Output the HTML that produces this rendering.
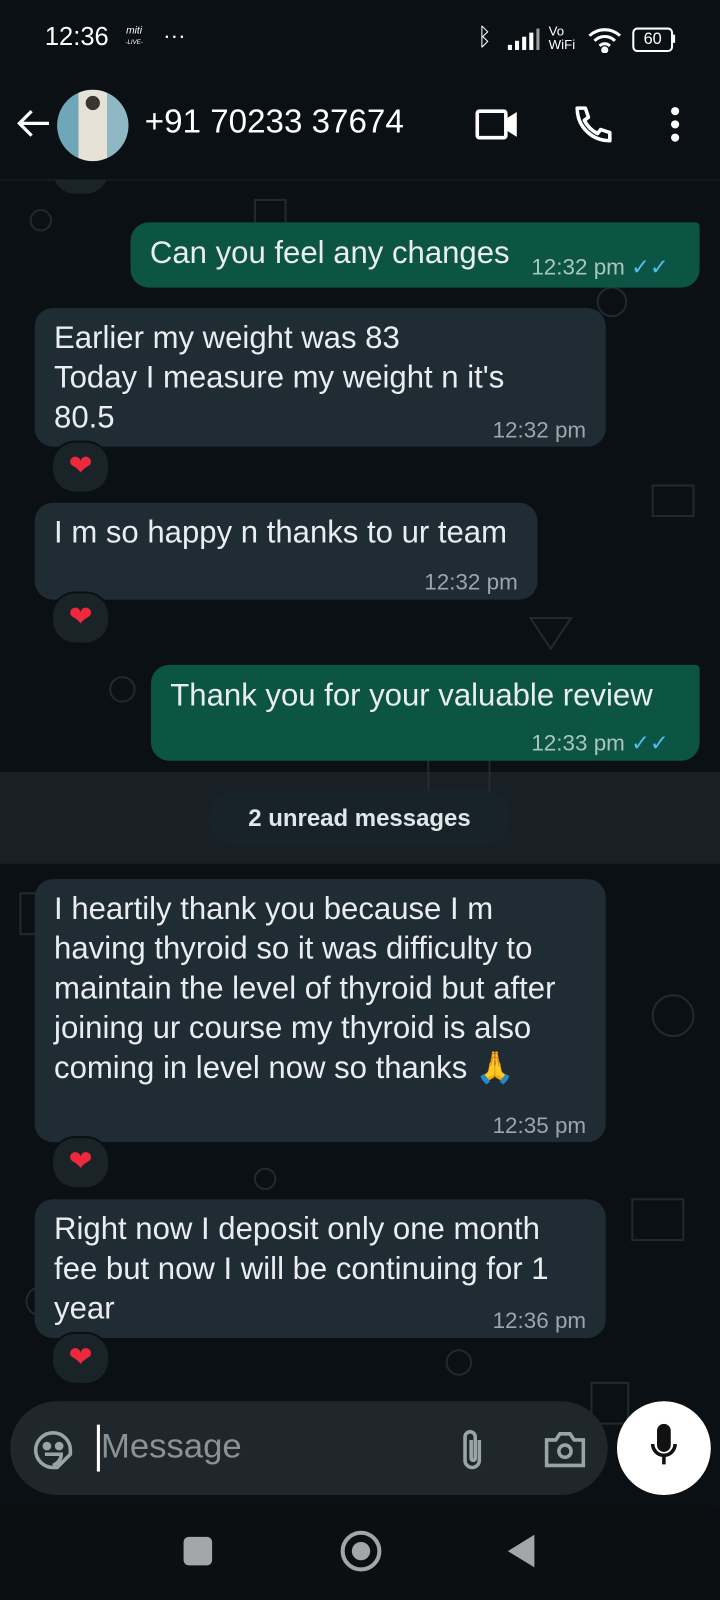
<!DOCTYPE html>
<html><head><meta charset="utf-8">
<style>
html,body{margin:0;padding:0;width:720px;height:1600px;overflow:hidden;background:#0b1014;}
#w{position:absolute;left:0;top:0;width:706px;height:1568px;transform:scale(1.0198);transform-origin:0 0;font-family:"Liberation Sans",sans-serif;color:#e9edef;}
.abs{position:absolute;}
.b{position:absolute;border-radius:18px;}
.in{background:#202c33;}
.out{background:#0c5443;}
.t{position:absolute;font-size:30.5px;line-height:39px;white-space:nowrap;}
.tm{position:absolute;font-size:22px;color:#9aa6ad;white-space:nowrap;}
.out .tm{color:#a9c6be;}
.heart{position:absolute;width:54px;height:48px;border-radius:24px;background:#1a2328;border:2px solid #0b1014;}
.heart:after{content:"❤";position:absolute;left:0;right:0;top:8px;text-align:center;color:#f0283c;font-size:28px;line-height:30px;font-family:"DejaVu Sans",sans-serif;}
</style></head><body><div id="w">
<svg class="abs" style="left:0;top:176px" width="706" height="1300" opacity="0.12" stroke="#cfd8dc" fill="none" stroke-width="2">
<circle cx="40" cy="40" r="10"/><rect x="250" y="20" width="30" height="25"/><circle cx="600" cy="120" r="14"/><rect x="640" y="300" width="40" height="30"/><circle cx="120" cy="500" r="12"/><rect x="420" y="560" width="60" height="40"/><circle cx="660" cy="820" r="20"/><rect x="20" y="700" width="40" height="40"/><circle cx="260" cy="980" r="10"/><rect x="620" y="1000" width="50" height="40"/><circle cx="40" cy="1100" r="14"/><rect x="580" y="1180" width="36" height="40"/><circle cx="450" cy="1160" r="12"/><path d="M520 430l20 30 20-30z"/><path d="M200 1250l30-20 30 20"/>
</svg>
<div class="heart" style="left:50px;top:140px;"></div>
<div class="abs" style="left:0;top:0;width:706px;height:176px;background:#0b1014;"></div>
<div class="abs" style="left:44px;top:22px;font-size:25px;color:#fff;">12:36</div>
<div class="abs" style="left:123px;top:26px;font-size:10px;color:#fff;font-style:italic;line-height:10px;text-align:center">miti<br><span style="font-size:6px">-LIVE-</span></div>
<div class="abs" style="left:160px;top:22px;font-size:22px;color:#fff;">···</div>
<div class="abs" style="left:468px;top:22px;font-size:24px;color:#fff;font-family:'DejaVu Sans'">ᛒ</div>
<svg class="abs" style="left:496px;top:28px" width="36" height="22" fill="#fff"><rect x="2" y="16" width="4" height="5"/><rect x="9" y="12" width="4" height="9"/><rect x="16" y="8" width="4" height="13"/><rect x="23" y="4" width="4" height="17"/><rect x="30" y="0" width="3" height="21" opacity=".6"/></svg>
<div class="abs" style="left:538px;top:24px;font-size:13px;color:#fff;line-height:13px">Vo<br>WiFi</div>
<svg class="abs" style="left:576px;top:26px" width="34" height="26" fill="none" stroke="#fff" stroke-width="3"><path d="M2 9a22 22 0 0 1 30 0M7 14a14 14 0 0 1 20 0M12 19a7 7 0 0 1 10 0"/><circle cx="17" cy="23" r="2" fill="#fff"/></svg>
<div class="abs" style="left:620px;top:27px;width:36px;height:20px;border:2px solid #fff;border-radius:5px;font-size:16px;color:#fff;text-align:center;line-height:20px;">60</div>
<div class="abs" style="left:659px;top:34px;width:3px;height:8px;background:#fff"></div>
<svg class="abs" style="left:16px;top:106px" width="34" height="30" fill="none" stroke="#fff" stroke-width="3.2"><path d="M32 15H3M15 3L3 15l12 12"/></svg>
<div class="abs" style="left:56px;top:88px;width:70px;height:70px;border-radius:50%;background:linear-gradient(90deg,#6fa6b8 0 30%,#e6e3d6 30% 70%,#8fb8c4 70%);"></div>
<div class="abs" style="left:84px;top:94px;width:14px;height:14px;border-radius:50%;background:#3a3432"></div>
<div class="abs" style="left:142px;top:101px;font-size:32.5px;color:#fff;">+91 70233 37674</div>
<svg class="abs" style="left:466px;top:106px" width="42" height="32" fill="none" stroke="#fff" stroke-width="3.5"><rect x="2" y="3" width="28" height="26" rx="2"/><path d="M31 12l8-5v18l-8-5z" fill="#fff"/></svg>
<svg class="abs" style="left:560px;top:102px" width="40" height="40" fill="none" stroke="#fff" stroke-width="3.5" stroke-linejoin="round"><path d="M6 4l8 0 3 9-4 3c3 6 7 10 13 13l3-4 9 3v8c-18 0-32-14-32-32z"/></svg>
<svg class="abs" style="left:656px;top:104px" width="12" height="36" fill="#fff"><circle cx="6" cy="5" r="4"/><circle cx="6" cy="18" r="4"/><circle cx="6" cy="31" r="4"/></svg>
<div class="abs" style="left:0;top:176px;width:706px;height:1px;background:#1c262c"></div>
<div class="b out" style="left:128px;top:218px;width:558px;height:64px;border-top-right-radius:4px;">
<div class="t" style="left:19px;top:11px;">Can you feel any changes</div>
<div class="tm" style="left:393px;top:31px;">12:32 pm <span style="color:#53bdeb">✓✓</span></div></div>
<div class="b in" style="left:34px;top:302px;width:560px;height:136px;">
<div class="t" style="left:19px;top:10px;">Earlier my weight was 83<br>Today I measure my weight n it's<br>80.5</div>
<div class="tm" style="left:449px;top:107px;">12:32 pm</div></div>
<div class="heart" style="left:50px;top:432px;"></div>
<div class="b in" style="left:34px;top:493px;width:493px;height:95px;">
<div class="t" style="left:19px;top:10px;">I m so happy n thanks to ur team</div>
<div class="tm" style="left:382px;top:65px;">12:32 pm</div></div>
<div class="heart" style="left:50px;top:580px;"></div>
<div class="b out" style="left:148px;top:652px;width:538px;height:94px;border-top-right-radius:4px;">
<div class="t" style="left:19px;top:11px;">Thank you for your valuable review</div>
<div class="tm" style="left:373px;top:64px;">12:33 pm <span style="color:#53bdeb">✓✓</span></div></div>
<div class="abs" style="left:0;top:757px;width:706px;height:90px;background:rgba(40,52,58,.45);"></div>
<div class="abs" style="left:205px;top:775px;width:295px;height:55px;border-radius:28px;background:#182329;font-size:23.5px;font-weight:bold;text-align:center;line-height:55px;color:#e0e6e9;">2 unread messages</div>
<div class="b in" style="left:34px;top:862px;width:560px;height:258px;">
<div class="t" style="left:19px;top:10px;">I heartily thank you because I m<br>having thyroid so it was difficulty to<br>maintain the level of thyroid but after<br>joining ur course my thyroid is also<br>coming in level now so thanks <span style="color:#f2b233">🙏</span></div>
<div class="tm" style="left:449px;top:229px;">12:35 pm</div></div>
<div class="heart" style="left:50px;top:1114px;"></div>
<div class="b in" style="left:34px;top:1176px;width:560px;height:136px;">
<div class="t" style="left:19px;top:10px;">Right now I deposit only one month<br>fee but now I will be continuing for 1<br>year</div>
<div class="tm" style="left:449px;top:106px;">12:36 pm</div></div>
<div class="heart" style="left:50px;top:1306px;"></div>
<div class="abs" style="left:10px;top:1374px;width:586px;height:92px;border-radius:46px;background:#1f272c;"></div>
<svg class="abs" style="left:32px;top:1402px" width="40" height="40" fill="none" stroke="#9aa3a8" stroke-width="3.5"><path d="M20 37A17 17 0 1 1 37 20L37 24 24 37z"/><circle cx="14" cy="16" r="2.5" fill="#9aa3a8"/><circle cx="26" cy="16" r="2.5" fill="#9aa3a8"/><path d="M12 24h16c0 6-4 9-8 11"/></svg>
<div class="abs" style="left:95px;top:1397px;width:3px;height:46px;background:#fff"></div>
<div class="abs" style="left:99px;top:1399px;font-size:34px;color:#8b9296;">Message</div>
<svg class="abs" style="left:448px;top:1400px" width="30" height="44" fill="none" stroke="#9aa3a8" stroke-width="3.5"><path d="M22 12v20a7 7 0 0 1-14 0V9a5 5 0 0 1 10 0v21a2 2 0 0 1-4 0V12"/></svg>
<svg class="abs" style="left:533px;top:1403px" width="42" height="36" fill="none" stroke="#9aa3a8" stroke-width="3.5"><path d="M3 9h9l4-6h10l4 6h9v25H3z"/><circle cx="21" cy="20" r="6"/></svg>
<div class="abs" style="left:605px;top:1374px;width:92px;height:92px;border-radius:50%;background:#fff;"></div>
<svg class="abs" style="left:636px;top:1396px" width="30" height="50" fill="none" stroke="#111" stroke-width="3.5"><rect x="10" y="2" width="10" height="24" rx="5" fill="#111"/><path d="M4 20a11 11 0 0 0 22 0M15 31v9"/></svg>
<div class="abs" style="left:0;top:1480px;width:706px;height:88px;background:#0b0f12;"></div>
<div class="abs" style="left:180px;top:1507px;width:28px;height:28px;border-radius:5px;background:#a3a6a8;"></div>
<div class="abs" style="left:334px;top:1501px;width:32px;height:32px;border-radius:50%;border:4px solid #a3a6a8;"></div>
<div class="abs" style="left:345px;top:1512px;width:18px;height:18px;border-radius:50%;background:#a3a6a8;"></div>
<svg class="abs" style="left:496px;top:1503px" width="30" height="36"><path d="M28 2v32L2 18z" fill="#a3a6a8"/></svg>
</div></body></html>
